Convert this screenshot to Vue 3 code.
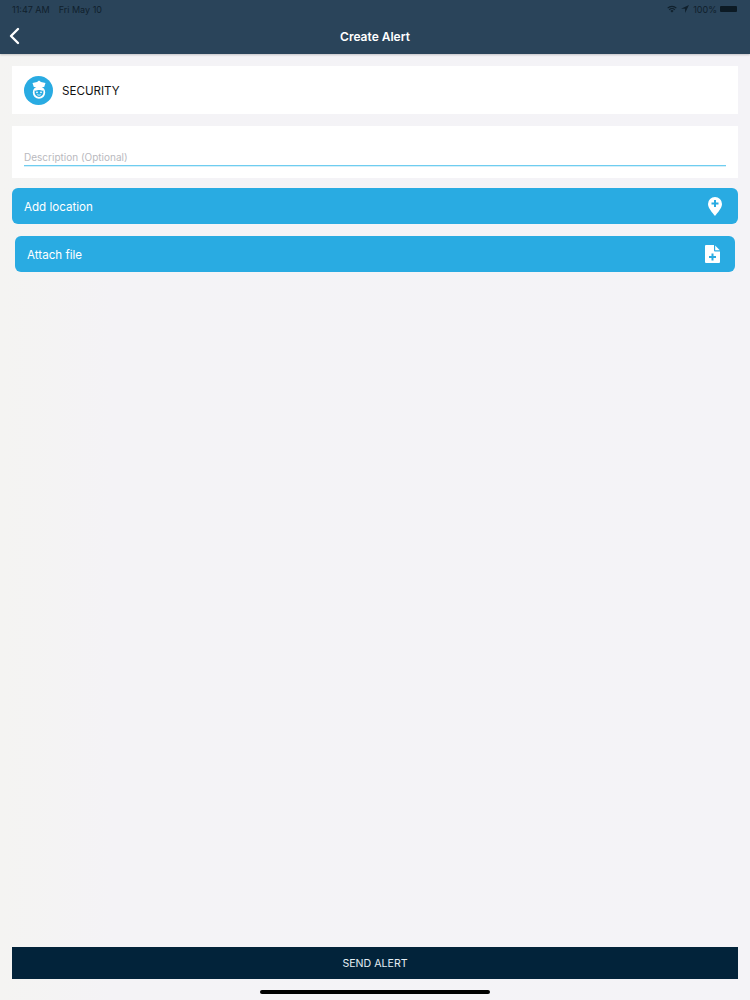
<template>
  <div class="screen">
    <!-- Header -->
    <header class="app-header">
      <div class="status-bar">
        <div class="status-left">
          <span>11:47 AM</span>
          <span>Fri May 10</span>
        </div>
        <div class="status-right">
          <svg width="10" height="8" viewBox="0 0 12 9">
            <path d="M0.3 3a8 8 0 0 1 11.4 0l-1 1a6.6 6.6 0 0 0-9.4 0z" fill="#10202c" />
            <path d="M2.2 4.9a5.3 5.3 0 0 1 7.6 0l-1 1a3.9 3.9 0 0 0-5.6 0z" fill="#10202c" />
            <path d="M4.1 6.8a2.6 2.6 0 0 1 3.8 0L6 8.8z" fill="#10202c" />
          </svg>
          <svg class="arrow-icon" width="8" height="8" viewBox="0 0 9 9">
            <path d="M9 0L0 4.2h4.6V9z" fill="#10202c" />
          </svg>
          <span class="battery-text">100%</span>
          <span class="battery"></span>
        </div>
      </div>
      <div class="nav-bar">
        <svg class="back-icon" width="12" height="18" viewBox="0 0 12 18">
          <path d="M10 2L3 9l7 7" fill="none" stroke="#fff" stroke-width="2.4" stroke-linecap="round" stroke-linejoin="round" />
        </svg>
        <span class="nav-title">Create Alert</span>
      </div>
    </header>

    <main class="content">
      <div class="card category-card">
        <div class="category-icon">
          <svg width="20" height="20" viewBox="0 0 20 20">
            <path d="M10 .5l2 1.500 4.500 1-1.300 4H4.800l-1.300-4 4.500-1z" fill="#fff" />
            <path d="M3.800 12.500a6.200 6.200 0 0 1 12.400 0a6.200 6.200 0 0 1-12.400 0z" fill="#fff" />
            <path d="M5.600 10.500c1.500.5 3-.6 4.400-.6s2.900 1.100 4.400.6v2a4.400 4.400 0 0 1-8.800 0z" fill="#29abe2" />
            <circle cx="8" cy="12.300" r="0.900" fill="#fff" />
            <circle cx="12" cy="12.300" r="0.900" fill="#fff" />
            <path d="M8.200 14.600c1 .7 2.600.7 3.600 0" fill="none" stroke="#fff" stroke-width="0.800" />
          </svg>
        </div>
        <span class="category-name">SECURITY</span>
      </div>

      <div class="card description-card">
        <div class="description-input">Description (Optional)</div>
      </div>

      <div class="action-btn">
        <span class="btn-label">Add location</span>
        <svg class="pin-icon" width="14" height="19" viewBox="0 0 14 19">
          <path d="M7 0a7 7 0 0 1 7 7c0 4.200-4.500 8.800-7 12C4.500 15.800 0 11.200 0 7a7 7 0 0 1 7-7z" fill="#fff" />
          <path d="M7 3v7M3.500 6.500h7" stroke="#29abe2" stroke-width="2" />
        </svg>
      </div>

      <div class="action-btn attach-btn">
        <span class="btn-label">Attach file</span>
        <svg width="15" height="18" viewBox="0 0 15 18">
          <path d="M1 0H9V5.500a1 1 0 0 0 1 1H15V17a1 1 0 0 1-1 1H1a1 1 0 0 1-1-1V1a1 1 0 0 1 1-1z" fill="#fff" />
          <path d="M10.200.5L14.800 5.300H10.200z" fill="#fff" />
          <path d="M7.500 8.500v7M4 12h7" stroke="#29abe2" stroke-width="2" />
        </svg>
      </div>
    </main>

    <footer class="footer">
      <div class="send-btn">SEND ALERT</div>
      <div class="home-indicator"></div>
    </footer>
  </div>
</template>

<script setup>
</script>

<style>
body {
  margin: 0;
}
</style>

<style scoped>
.screen {
  width: 750px;
  height: 1000px;
  display: flex;
  flex-direction: column;
  background: linear-gradient(90deg, #f4f4f2 0%, #f4f3f6 15%, #f4f3f7 100%);
  font-family: Inter, "Liberation Sans", sans-serif;
  overflow: hidden;
}

.app-header {
  height: 54px;
  flex-shrink: 0;
  background: #2a445a;
  box-shadow: 0 1px 2px rgba(0, 0, 0, 0.2);
}

.status-bar {
  height: 18px;
  display: flex;
  align-items: center;
  justify-content: space-between;
  padding: 0 13px 0 12px;
  font-size: 9px;
  color: #10202c;
}

.status-left {
  display: flex;
  gap: 9px;
}

.status-right {
  display: flex;
  align-items: center;
  gap: 4px;
}

.battery {
  width: 17px;
  height: 6px;
  margin-left: -1px;
  background: #0c1a24;
  border-radius: 1px;
}

.nav-bar {
  height: 36px;
  display: flex;
  align-items: center;
  justify-content: center;
  position: relative;
}

.back-icon {
  position: absolute;
  left: 8px;
  top: 9px;
}

.nav-title {
  font-size: 12px;
  font-weight: 600;
  color: #fff;
}

.content {
  flex: 1;
  display: flex;
  flex-direction: column;
  padding: 12px 12px 0;
}

.card {
  background: #fff;
}

.category-card {
  height: 48px;
  display: flex;
  align-items: center;
  gap: 9px;
  padding: 0 12px;
  margin-bottom: 12px;
}

.category-icon {
  width: 29px;
  height: 29px;
  border-radius: 50%;
  background: #29abe2;
  display: flex;
  align-items: center;
  justify-content: center;
}

.category-name {
  padding-top: 1px;
  font-size: 11.6px;
  color: #111;
}

.description-card {
  height: 52px;
  padding: 0 12px;
  display: flex;
  flex-direction: column;
  justify-content: flex-end;
  margin-bottom: 10px;
}

.description-input {
  height: 15px;
  margin-bottom: 12px;
  font-size: 10px;
  line-height: 15px;
  color: #b9b9be;
  border-bottom: 1px solid #6fcdf0;
  box-shadow: 0 1px 0 #d4eff9;
}

.action-btn {
  height: 36px;
  display: flex;
  align-items: center;
  justify-content: space-between;
  padding: 0 15px 0 12px;
  margin-bottom: 12px;
  border-radius: 6px;
  background: #29abe2;
  color: #fff;
  font-size: 11.6px;
}

.btn-label {
  padding-top: 1px;
}

.pin-icon {
  margin-right: 1px;
}

.attach-btn {
  margin: 0 3px;
}

.footer {
  flex-shrink: 0;
  height: 53px;
  padding: 0 12px;
  display: flex;
  flex-direction: column;
  align-items: center;
}

.send-btn {
  width: 100%;
  height: 32px;
  display: flex;
  align-items: center;
  justify-content: center;
  background: #02233a;
  color: #e4eef4;
  font-size: 10.6px;
}

.home-indicator {
  width: 230px;
  height: 4px;
  margin-top: 11px;
  border-radius: 2px;
  background: #000;
}
</style>
